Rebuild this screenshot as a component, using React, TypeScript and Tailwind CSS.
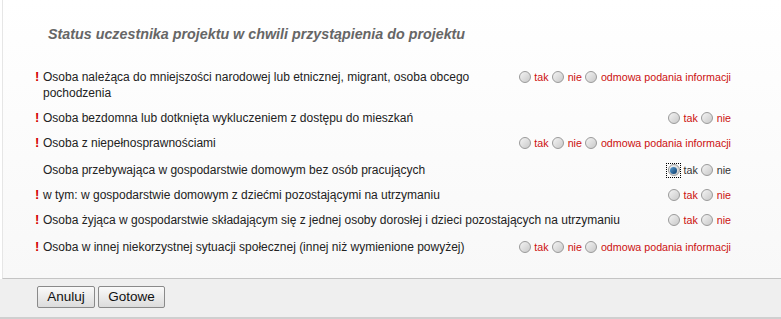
import React from 'react';

type Row = { label: string; required: boolean; options: string[]; checked?: number; extra?: string };

const THREE = ['tak', 'nie', 'odmowa podania informacji'];
const TWO = ['tak', 'nie'];

const rows: Row[] = [
  { label: 'Osoba należąca do mniejszości narodowej lub etnicznej, migrant, osoba obcego pochodzenia', required: true, options: THREE },
  { label: 'Osoba bezdomna lub dotknięta wykluczeniem z dostępu do mieszkań', required: true, options: TWO },
  { label: 'Osoba z niepełnosprawnościami', required: true, options: THREE },
  { label: 'Osoba przebywająca w gospodarstwie domowym bez osób pracujących', required: false, options: TWO, checked: 0, extra: 'mt-[2px]' },
  { label: 'w tym: w gospodarstwie domowym z dziećmi pozostającymi na utrzymaniu', required: true, options: TWO },
  { label: 'Osoba żyjąca w gospodarstwie składającym się z jednej osoby dorosłej i dzieci pozostających na utrzymaniu', required: true, options: TWO },
  { label: 'Osoba w innej niekorzystnej sytuacji społecznej (innej niż wymienione powyżej)', required: true, options: THREE, extra: 'mt-[2px]' },
];

const Radio: React.FC<{ checked?: boolean }> = ({ checked }) => (
  <span className={`inline-flex items-center justify-center w-[13px] h-[13px] ${checked ? 'outline outline-1 outline-dotted outline-black outline-offset-0' : ''}`}>
    <span className="w-[12px] h-[12px] rounded-full border border-[#9a9a9a] bg-gradient-to-br from-[#f4f4f4] to-[#c9c9c9] flex items-center justify-center">
      {checked && <span className="w-[7px] h-[7px] rounded-full bg-gradient-to-br from-[#5aa0d6] to-[#0b3d6b]" />}
    </span>
  </span>
);

const App: React.FC = () => {
  return (
    <div className="w-[781px] h-[319px] flex flex-col bg-white text-[#222] font-['Liberation_Sans',Arial,sans-serif]">
      <div className="flex-1 ml-[2px] border-l border-[#e6e6e6] border-b border-b-[#c4c4c4] bg-gradient-to-b from-white to-[#f8f8f8] pl-[32px] pr-[50px]">
        <h2 className="mt-[26px] ml-[13px] text-[14.3px] leading-4 font-bold italic text-[#666]">
          Status uczestnika projektu w chwili przystąpienia do projektu
        </h2>
        <div className="mt-[27px] flex flex-col gap-[9px]">
          {rows.map((r, i) => (
            <div key={i} className={`flex items-start justify-between gap-2 ${r.extra ?? ''}`}>
              <div className="flex items-start text-[12px] leading-4">
                <span className="w-[8px] shrink-0 text-[#d40000] font-bold text-[13px]">{r.required ? '!' : ''}</span>
                <span>{r.label}</span>
              </div>
              <div className={`flex items-center gap-[3px] shrink-0 whitespace-nowrap text-[10.7px] leading-4 ${r.required ? 'text-[#cc1010]' : 'text-[#333]'}`}>
                {r.options.map((o, j) => (
                  <React.Fragment key={o}>
                    <Radio checked={r.checked === j} />
                    <span>{o}</span>
                  </React.Fragment>
                ))}
              </div>
            </div>
          ))}
        </div>
      </div>
      <div className="h-[40px] bg-[#efefef] border-b-2 border-[#cfcfcf] flex items-start pt-[7px] pl-[37px] gap-[3px]">
        <button className="w-[58px] h-[22px] text-[13.5px] text-[#111] border border-[#8a8a8a] rounded-[2px] bg-gradient-to-b from-[#fafafa] to-[#dcdcdc]">Anuluj</button>
        <button className="w-[67px] h-[22px] text-[13.5px] text-[#111] border border-[#8a8a8a] rounded-[2px] bg-gradient-to-b from-[#fafafa] to-[#dcdcdc]">Gotowe</button>
      </div>
    </div>
  );
};

export default App;
